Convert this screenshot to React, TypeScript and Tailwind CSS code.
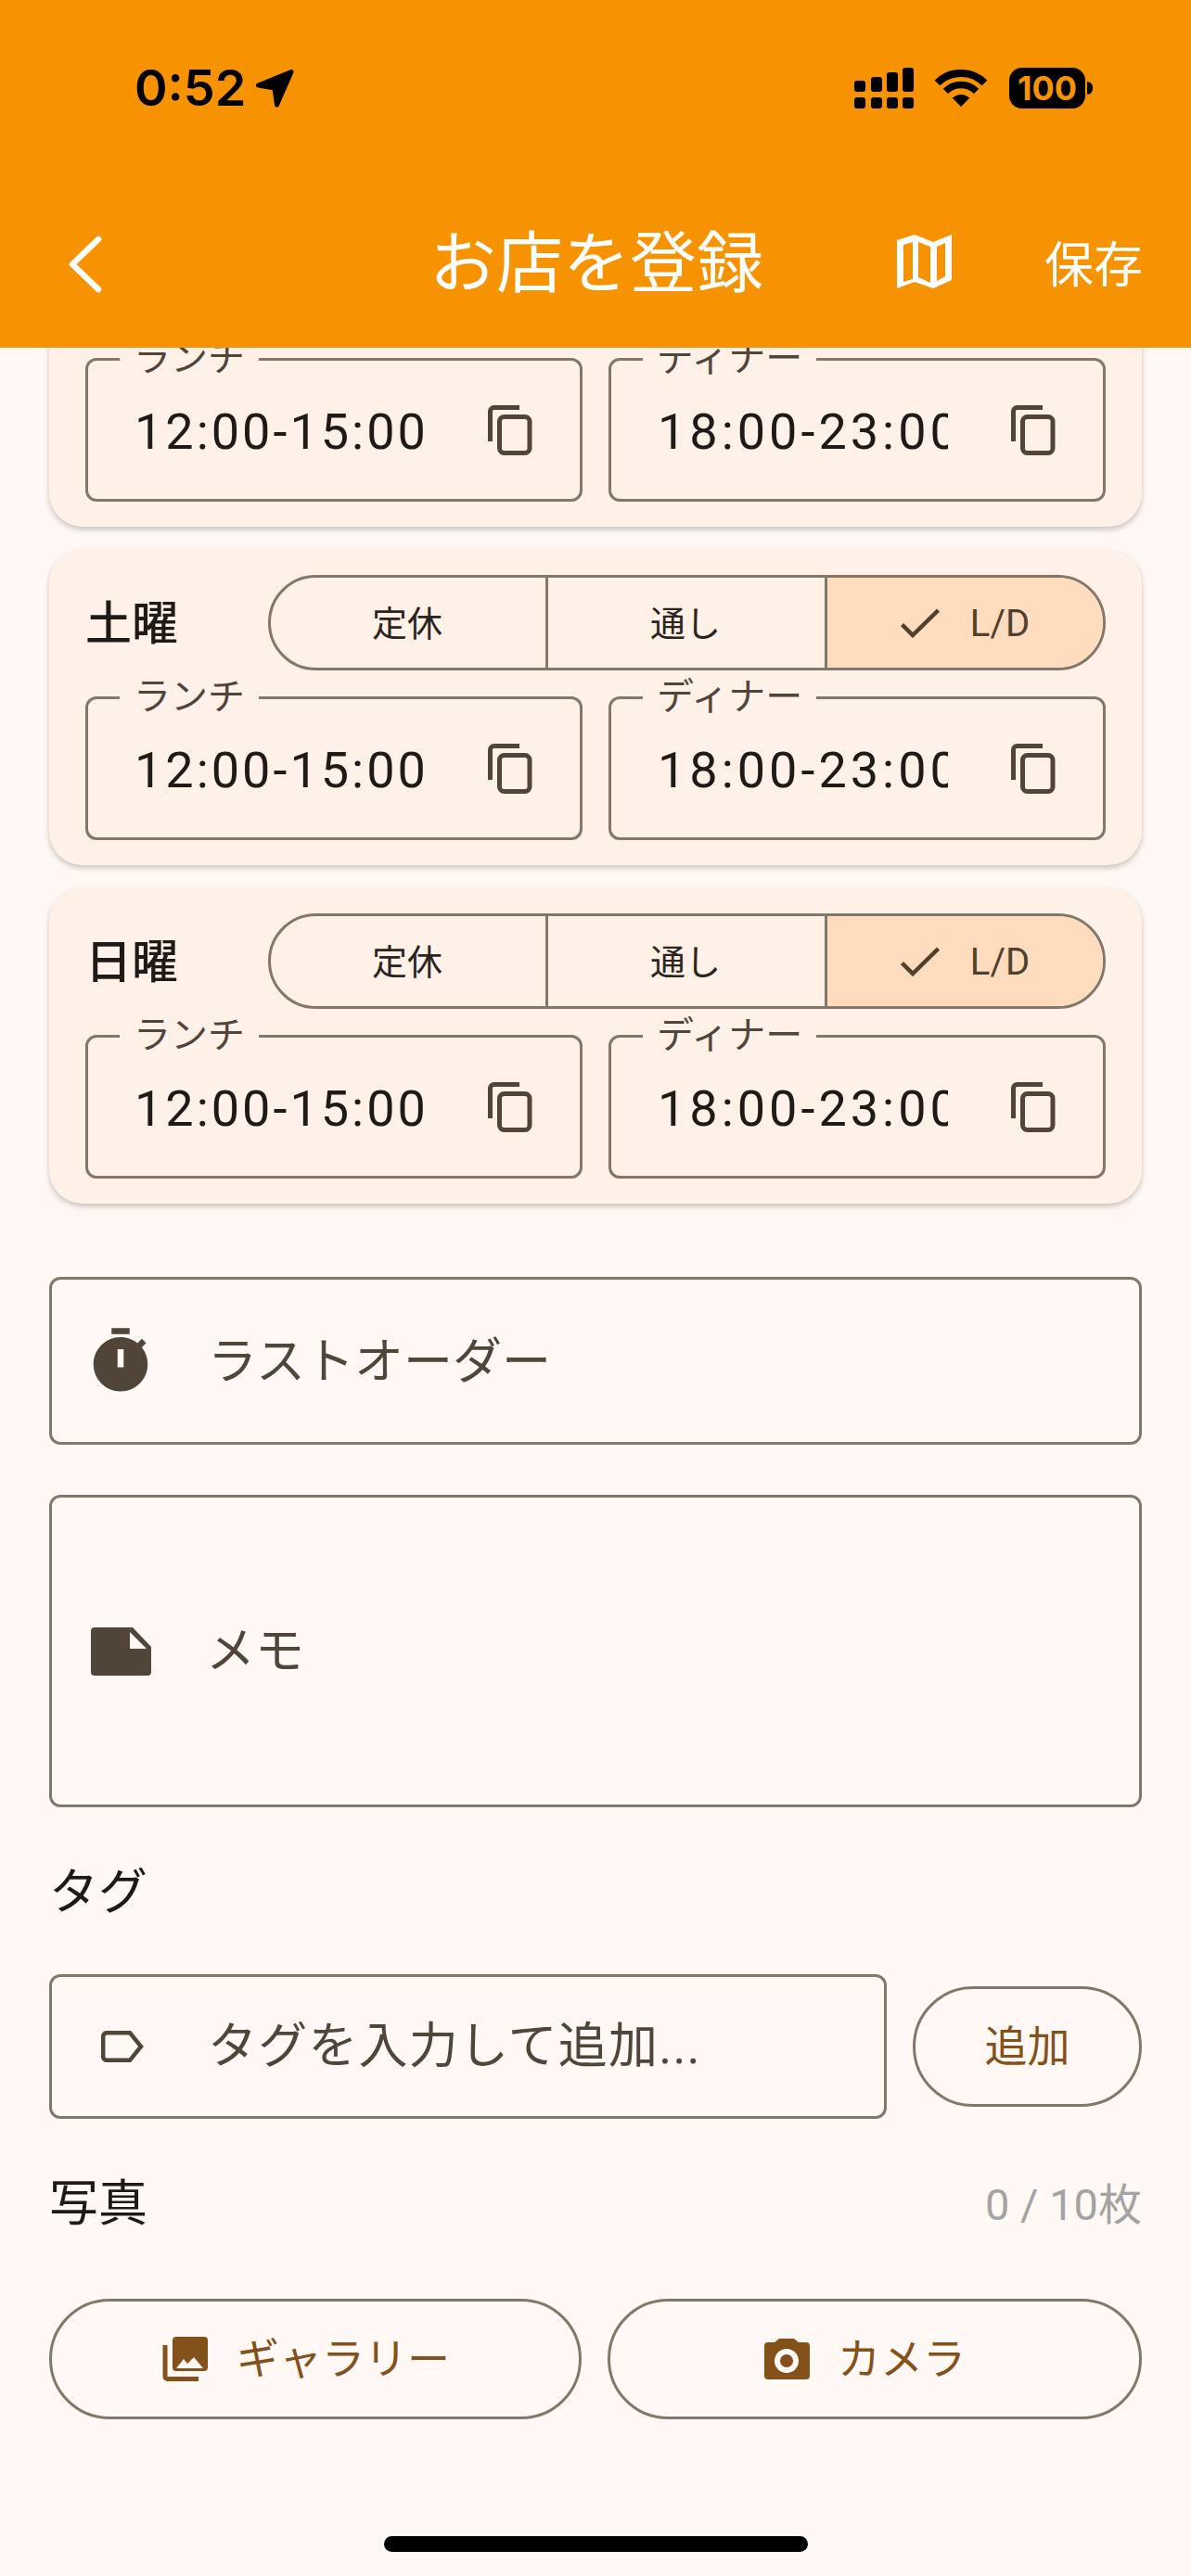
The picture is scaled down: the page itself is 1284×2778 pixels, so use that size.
const font = "font-['Roboto','Noto_Sans_CJK_JP',sans-serif]";

function CopyIcon() {
  return (
    <svg className="w-[48px] h-[54px] shrink-0" viewBox="0 0 48 54" fill="none" stroke="#51453a" strokeWidth="5">
      <path d="M2.500 39V6.500a4 4 0 0 1 4-4H34" />
      <rect x="12.500" y="12.500" width="32.500" height="39" rx="5" />
    </svg>
  );
}

function TimeField({ label, value, valueClass }: { label: string; value: string; valueClass: string }) {
  return (
    <div className="relative flex-1 h-[155px] rounded-[12px] border-[3px] border-[#83776a] flex items-center justify-between pl-[50px] pr-[51px]">
      <span className="absolute left-[34px] -top-[26px] bg-[#fff1e8] px-[15px] text-[40px] leading-[48px] text-[#51453a]">{label}</span>
      <span className={`overflow-hidden whitespace-nowrap text-[54px] pt-[3px] text-[#201a17] ${valueClass}`}>{value}</span>
      <CopyIcon />
    </div>
  );
}

function DayCard({ day }: { day?: string }) {
  return (
    <div className="h-[340px] rounded-[36px] bg-[#fff1e8] shadow-[0_3px_6px_rgba(0,0,0,0.22)] px-[39px] pt-[27px] mb-[25px]">
      {day ? (
        <div className="flex items-center h-[103px]">
          <span className="w-[197px] text-[50px] font-medium pt-[3px] text-[#201a17]">{day}</span>
          <div className="flex-1 flex h-full rounded-full border-[3px] border-[#83776a] overflow-hidden text-[38px] text-[#2b2520]">
            <div className="w-[299px] flex items-center justify-center pr-[2px] pt-[3px] border-r-[3px] border-[#83776a]">定休</div>
            <div className="w-[301px] flex items-center justify-center pr-[2px] pt-[3px] border-r-[3px] border-[#83776a]">通し</div>
            <div className="flex-1 flex items-center justify-center gap-[33px] bg-[#ffdcbe] text-[#51402c]">
              <svg className="w-[42px] h-[32px]" viewBox="0 0 42 32" fill="none" stroke="#51402c" strokeWidth="4.5">
                <path d="M1.5 17.5L13 29L40.5 2" />
              </svg>
              <span className="text-[40px] pt-[3px]">L/D</span>
            </div>
          </div>
        </div>
      ) : (
        <div className="h-[103px]" />
      )}
      <div className="flex gap-[28px] mt-[28px]">
        <TimeField label="ランチ" value="12:00-15:00" valueClass="w-[325px] tracking-[3px]" />
        <TimeField label="ディナー" value="18:00-23:00" valueClass="w-[313px] tracking-[4px]" />
      </div>
    </div>
  );
}

export default function App() {
  return (
    <div className={`relative h-[2778px] w-[1284px] flex flex-col overflow-hidden bg-[#fff8f5] ${font}`}>
      <header className="relative z-10 h-[375px] shrink-0 bg-[#f79300] pt-[73px]">
        <div className="flex items-center h-[44px] pl-[145px] pr-[106px]">
          <span className="font-['Inter',sans-serif] text-[54px] leading-none font-semibold text-black">0:52</span>
          <svg className="w-[42px] h-[42px] ml-[10px]" viewBox="0 0 42 42" fill="#000" stroke="#000" strokeWidth="5" strokeLinejoin="round">
            <path d="M3.5 18L39 3.5L23.5 39L21 21Z" />
          </svg>
          <div className="flex-1" />
          <svg className="w-[64px] h-[44px]" viewBox="0 0 64 44" fill="#000">
            <rect x="0" y="14" width="12" height="12" rx="3" />
            <rect x="18" y="10" width="12" height="16" rx="3" />
            <rect x="35" y="5" width="12" height="21" rx="3" />
            <rect x="52" y="0" width="12" height="26" rx="3" />
            <rect x="0" y="32" width="12" height="12" rx="3" />
            <rect x="18" y="32" width="12" height="12" rx="3" />
            <rect x="35" y="32" width="12" height="12" rx="3" />
            <rect x="52" y="32" width="12" height="12" rx="3" />
          </svg>
          <svg className="w-[56px] h-[40px] ml-[23px]" viewBox="0 0 56 40" fill="none" stroke="#000">
            <path d="M2.5 14.5A36 36 0 0 1 53.5 14.5" strokeWidth="8" />
            <path d="M11.4 23.4A23.5 23.5 0 0 1 44.6 23.4" strokeWidth="7.5" />
            <path d="M28 40L18.8 30.8A13 13 0 0 1 37.2 30.8Z" fill="#000" stroke="none" />
          </svg>
          <div className="ml-[24px] w-[82px] h-[44px] rounded-[14px] bg-black flex items-center justify-center font-['Inter',sans-serif] text-[36px] font-bold leading-none text-[#f79300]">100</div>
          <div className="ml-[2px] w-[6px] h-[14px] rounded-r-full bg-black" />
        </div>
        <div className="flex items-center h-[66px] mt-[135px] pl-[74px] text-white">
          <svg className="w-[36px] h-[62px]" viewBox="0 0 36 62" fill="none" stroke="#fff" strokeWidth="6.500" strokeLinecap="round" strokeLinejoin="round">
            <path d="M32 4L4 31L32 58" />
          </svg>
          <h1 className="ml-[353px] w-[360px] text-[72px] leading-none whitespace-nowrap">お店を登録</h1>
          <svg className="ml-[143px] w-[60px] h-[60px] -mt-[4px]" viewBox="0 0 60 60" fill="#fff" fillRule="evenodd">
            <path d="M1 6L20 0L40 8L60 0V49L40 58L20 51L1 58ZM8 11V51L18 48V8ZM24 8V46L37 52V13ZM44 13V50L53 45V9Z" />
          </svg>
          <span className="ml-[100px] text-[53px] leading-none pt-[5px]">保存</span>
        </div>
      </header>

      <main className="flex-1 overflow-hidden px-[53px]">
        <div className="-mt-[147px]">
          <DayCard />
          <DayCard day="土曜" />
          <DayCard day="日曜" />

          <div className="mt-[79px] h-[181px] rounded-[12px] border-[3px] border-[#83776a] flex items-center pl-[35px]">
            <svg className="w-[78px] h-[78px] shrink-0" viewBox="0 0 24 24" fill="#51453a">
              <path d="M9 1h6v2H9z" />
              <path d="M19.03 7.39l1.42-1.42c-.43-.51-.9-.99-1.41-1.41l-1.42 1.42C16.07 4.74 14.12 4 12 4c-4.97 0-9 4.03-9 9 0 4.97 4.02 9 9 9s9-4.03 9-9c0-2.12-.74-4.07-1.97-5.61zM13 14h-2V8h2v6z" />
            </svg>
            <span className="ml-[55px] pt-[4px] text-[53px] text-[#51453a]">ラストオーダー</span>
          </div>

          <div className="mt-[54px] h-[337px] rounded-[12px] border-[3px] border-[#83776a] flex items-center pl-[42px]">
            <svg className="w-[65px] h-[52px] shrink-0" viewBox="0 0 65 52">
              <path d="M4 0H45L65 21V48A4 4 0 0 1 61 52H4A4 4 0 0 1 0 48V4A4 4 0 0 1 4 0Z" fill="#51453a" />
              <path d="M42 5V23H60Z" fill="#fff8f5" />
            </svg>
            <span className="ml-[59px] pt-[2px] text-[53px] text-[#51453a]">メモ</span>
          </div>

          <div className="mt-[62px] h-[60px] leading-[60px] text-[53px] text-[#201a17]">タグ</div>

          <div className="mt-[58px] flex items-center gap-[28px]">
            <div className="w-[903px] h-[156px] rounded-[12px] border-[3px] border-[#83776a] flex items-center pl-[53px]">
              <svg className="w-[46px] h-[34px] shrink-0" viewBox="0 0 46 34" fill="none" stroke="#51453a" strokeWidth="4.5">
                <path d="M6 2.2H31L43 17L31 31.8H6A4 4 0 0 1 2.2 28V6A4 4 0 0 1 6 2.2Z" />
              </svg>
              <span className="ml-[69px] pt-[2px] text-[53px] tracking-[1.2px] text-[#51453a] whitespace-nowrap">タグを入力して追加...</span>
            </div>
            <button className="flex-1 h-[130px] rounded-full border-[3px] border-[#83776a] text-[46px] text-[#85511a]">追加</button>
          </div>

          <div className="mt-[63px] h-[60px] flex items-center justify-between">
            <span className="text-[53px] text-[#201a17]">写真</span>
            <span className="text-[47px] text-[#a3a3a3]">0 / 10枚</span>
          </div>

          <div className="mt-[71px] flex gap-[28px]">
            <button className="flex-1 h-[130px] rounded-full border-[3px] border-[#83776a] flex items-center justify-center gap-[30px] pr-[20px] text-[46px] text-[#85511a]">
              <svg className="w-[50px] h-[50px]" viewBox="0 0 50 50">
                <rect x="11" y="1" width="38" height="37" rx="4" fill="#85511a" />
                <path d="M3 10V44A2.5 2.5 0 0 0 5.500 46.500H39" fill="none" stroke="#85511a" strokeWidth="5" />
                <path d="M15 35L23 25L27 30L34 23L44 35Z" fill="#fff8f5" />
              </svg>
              ギャラリー
            </button>
            <button className="flex-1 h-[130px] rounded-full border-[3px] border-[#83776a] flex items-center justify-center gap-[30px] pr-[22px] text-[46px] text-[#85511a]">
              <svg className="w-[50px] h-[44px]" viewBox="0 0 50 44">
                <path d="M17 0H33L38 4H46A4 4 0 0 1 50 8V40A4 4 0 0 1 46 44H5A4 4 0 0 1 1 40V8A4 4 0 0 1 5 4H12Z" fill="#85511a" />
                <circle cx="25" cy="24" r="13" fill="#fff8f5" />
                <circle cx="25" cy="24" r="7" fill="#85511a" />
              </svg>
              カメラ
            </button>
          </div>
        </div>
      </main>

      <div className="absolute left-[414px] top-[2735px] w-[457px] h-[17px] rounded-full bg-black" />
    </div>
  );
}
